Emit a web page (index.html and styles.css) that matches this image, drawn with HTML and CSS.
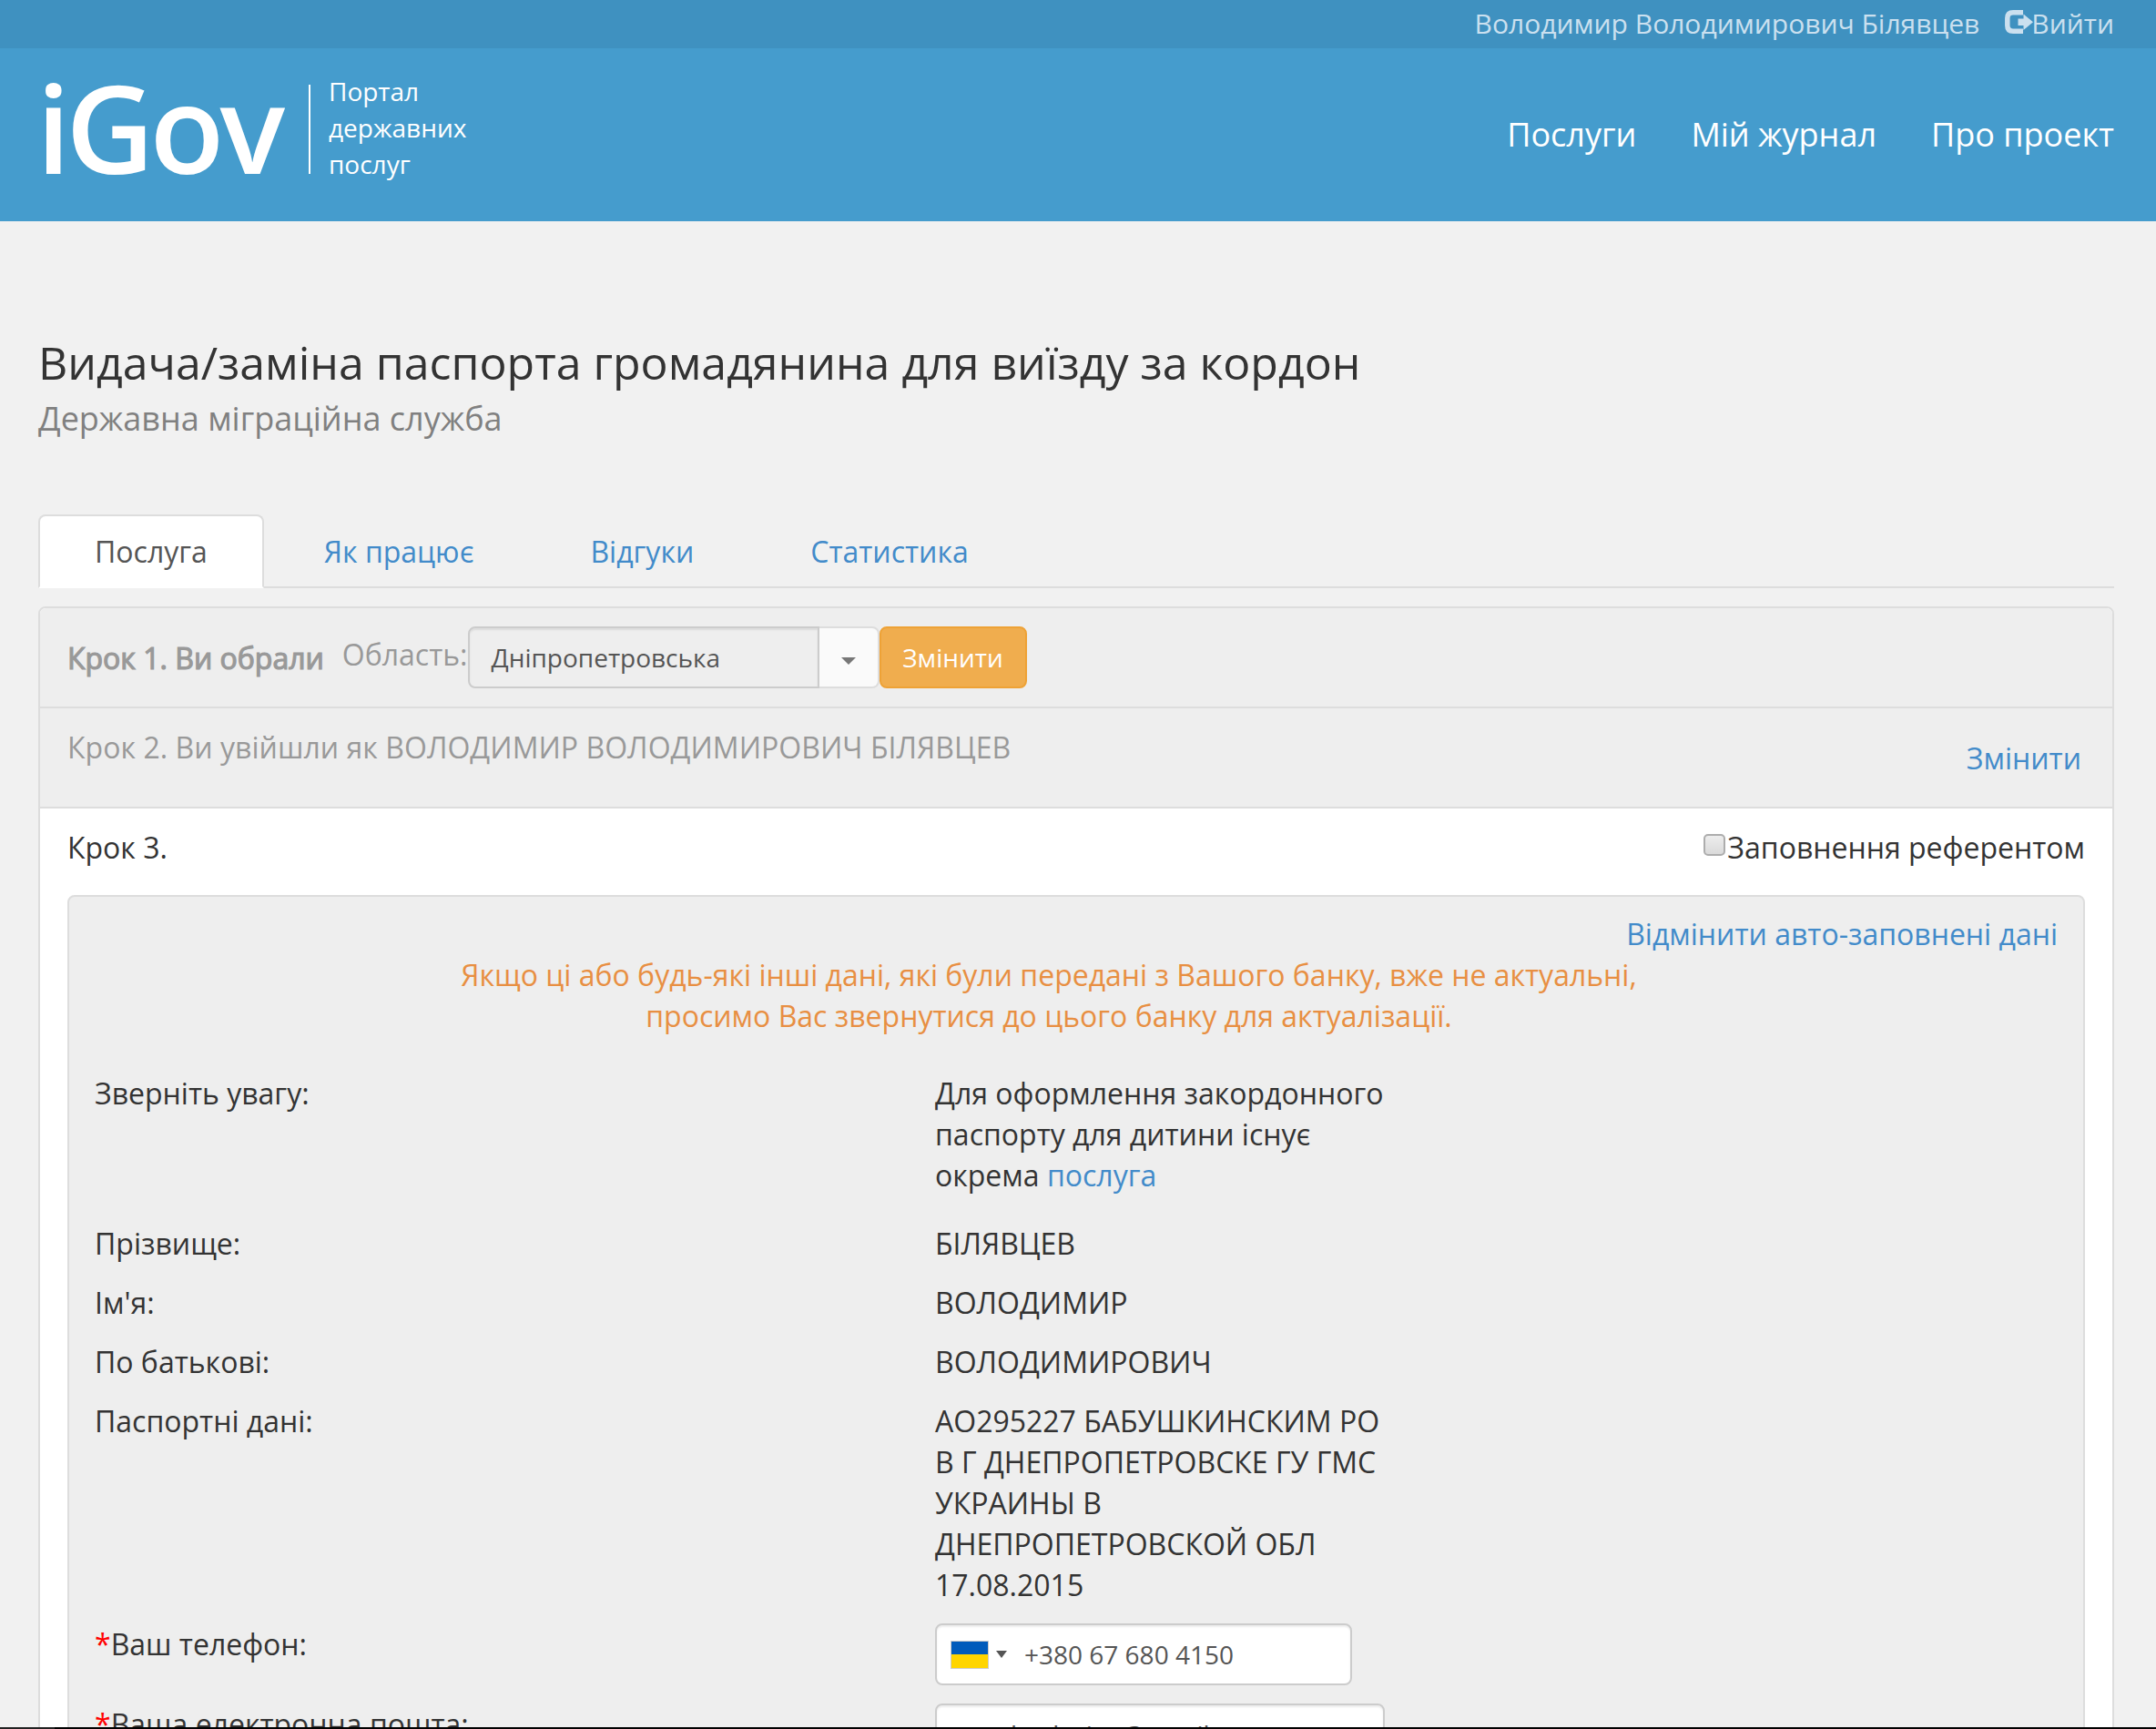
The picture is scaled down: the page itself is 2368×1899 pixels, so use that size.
FILE: index.html
```html
<!DOCTYPE html>
<html lang="uk">
<head>
<meta charset="utf-8">
<title>iGov – Портал державних послуг</title>
<link rel="stylesheet" href="styles.css">
</head>
<body>
<div class="topbar">
  <span class="user">Володимир Володимирович Білявцев</span>
  <a class="logout"><svg class="logout-icon" viewBox="0 0 31 28"><path d="M20 2.800H9Q2.800 2.800 2.800 9v8q0 6.200 6.200 6.200h11" fill="none" stroke="currentColor" stroke-width="5.500"/><path d="M14.500 9.500h6V4.500L31 13.300 20.500 22v-5h-6z" fill="currentColor"/></svg><span>Вийти</span></a>
</div>
<header class="header">
  <div class="brand">
    <span class="logo">iGov</span>
    <span class="tagline"><span>Портал<br>державних<br>послуг</span></span>
  </div>
  <nav class="nav"><a>Послуги</a><a>Мій журнал</a><a>Про проект</a></nav>
</header>
<main class="main">
  <h1 class="title">Видача/заміна паспорта громадянина для виїзду за кордон</h1>
  <p class="subtitle">Державна міграційна служба</p>
  <nav class="tabs"><a class="tab active">Послуга</a><a class="tab">Як працює</a><a class="tab">Відгуки</a><a class="tab">Статистика</a></nav>
  <section class="steps">
    <div class="step step1">
      <span class="step-name">Крок 1. Ви обрали</span>
      <span class="region-label">Область:</span>
      <div class="select"><span class="select-value">Дніпропетровська</span><span class="select-toggle"><i class="caret"></i></span></div>
      <button class="btn">Змінити</button>
    </div>
    <div class="step step2"><span class="who">Крок 2. Ви увійшли як ВОЛОДИМИР ВОЛОДИМИРОВИЧ БІЛЯВЦЕВ</span><a class="link change">Змінити</a></div>
    <div class="step3">
      <div class="step3-head"><span>Крок 3.</span><label class="check"><i class="box"></i>Заповнення референтом</label></div>
      <div class="form">
        <a class="link cancel">Відмінити авто-заповнені дані</a>
        <p class="warning">Якщо ці або будь-які інші дані, які були передані з Вашого банку, вже не актуальні,<br>просимо Вас звернутися до цього банку для актуалізації.</p>
        <div class="row note"><span>Зверніть увагу:</span><span>Для оформлення закордонного<br>паспорту для дитини існує<br>окрема <a class="link">послуга</a></span></div>
        <div class="row"><span>Прізвище:</span><span>БІЛЯВЦЕВ</span></div>
        <div class="row"><span>Ім'я:</span><span>ВОЛОДИМИР</span></div>
        <div class="row"><span>По батькові:</span><span>ВОЛОДИМИРОВИЧ</span></div>
        <div class="row"><span>Паспортні дані:</span><span>АО295227 БАБУШКИНСКИМ РО<br>В Г ДНЕПРОПЕТРОВСКЕ ГУ ГМС<br>УКРАИНЫ В<br>ДНЕПРОПЕТРОВСКОЙ ОБЛ<br>17.08.2015</span></div>
        <div class="row"><span><b class="req">*</b>Ваш телефон:</span><div class="input phone"><i class="flag"></i><i class="caret small"></i><span>+380 67 680 4150</span></div></div>
        <div class="row"><span><b class="req">*</b>Ваша електронна пошта:</span><div class="input email"><span>vyacheslavian@gmail.com</span></div></div>
      </div>
    </div>
  </section>
</main>
<div class="edge"></div>
</body>
</html>
```
FILE: styles.css
```css
* { box-sizing: border-box; }
body {
  margin: 0;
  height: 1899px;
  overflow: hidden;
  background: #f1f1f1;
  color: #333;
  font: 32px/45px "Open Sans", sans-serif;
  display: flex;
  flex-direction: column;
}
.topbar {
  flex: none;
  height: 53px;
  padding-right: 46px;
  background: #3f91c0;
  color: #cbe0ef;
  font-size: 30px;
  line-height: 51px;
  display: flex;
  justify-content: flex-end;
}
.logout { display: flex; margin-left: 28px; }
.logout-icon { width: 31px; height: 28px; margin: 11px -2px 0 0; }
.header {
  flex: none;
  height: 190px;
  padding: 0 46px 0 40px;
  background: #459ccd;
  color: #fff;
  display: flex;
  justify-content: space-between;
}
.brand { display: flex; }
.logo { width: 299px; height: 190px; font-size: 134px; font-weight: 600; line-height: 172px; letter-spacing: -5px; white-space: nowrap; }
.tagline { height: 98px; margin-top: 40px; padding-left: 20px; border-left: 2px solid #fff; font-size: 28px; line-height: 40px; }
.tagline span { display: block; margin-top: -13px; }
.nav { display: flex; gap: 60px; font-size: 36px; line-height: 190px; }
.main { padding: 0 46px 0 42px; flex: none; }
.title { margin: 126px 0 0; font-size: 50px; font-weight: 400; line-height: 59px; white-space: nowrap; }
.subtitle { margin: 7px 0 0; font-size: 36px; line-height: 50px; color: #808080; }
.tabs { display: flex; height: 81px; margin-top: 80px; border-bottom: 2px solid #ddd; }
.tab { height: 81px; padding: 0 60px; border: 2px solid transparent; color: #428bca; line-height: 78px; margin-right: 4px; }
.tab.active { background: #fff; border-color: #ddd; border-bottom-color: #fff; border-radius: 8px 8px 0 0; color: #555; }
.steps { height: 1300px; margin-top: 20px; border: 2px solid #ddd; border-radius: 8px; overflow: hidden; background: #fff; }
.step { height: 110px; padding: 20px 30px; background: #eee; border-bottom: 2px solid #ddd; color: #999; display: flex; }
.step-name { padding-top: 12px; margin-right: 20px; -webkit-text-stroke: 1.2px #999; }
.region-label { padding-top: 8px; }
.select { display: flex; width: 452px; height: 68px; font-size: 28px; line-height: 64px; }
.select-value { width: 386px; padding-left: 24px; border: 2px solid #ccc; border-radius: 8px 0 0 8px; box-shadow: inset 0 2px 2px rgba(0,0,0,.075); color: #555; }
.select-toggle { flex: 1; display: flex; align-items: center; justify-content: center; border: 2px solid #ddd; border-left: 0; border-radius: 0 8px 8px 0; background: #fafafa; }
.caret { border: 8px solid transparent; border-top-color: #777; border-bottom: 0; margin-top: 8px; }
.btn { width: 162px; height: 68px; padding: 0; border: 2px solid #eea236; border-radius: 8px; background: #f0ad4e; color: #fff; font: 28px/64px "Open Sans", sans-serif; }
.step2 { justify-content: space-between; }
.who { letter-spacing: .04px; }
.link { color: #428bca; }
.change { padding: 12px 4px 0 0; }
.step3 { padding: 20px 30px; }
.step3-head { display: flex; justify-content: space-between; height: 75px; }
.check { display: flex; }
.box { width: 24px; height: 24px; margin: 8px 2px 0 0; border: 2px solid #adadad; border-radius: 5px; background: linear-gradient(#ededed, #dadada); }
.form { height: 1300px; padding: 18px 28px; border: 2px solid #ddd; border-radius: 8px; background: #eee; }
.cancel { display: block; text-align: right; }
.warning { width: 2096px; margin: 0 0 40px; color: #e88f42; text-align: center; }
.row { display: grid; grid-template-columns: 923px 494px; margin-bottom: 20px; white-space: nowrap; }
.note { margin-bottom: 30px; }
.req { color: #f00; font-weight: 400; }
.input { height: 68px; border: 2px solid #ccc; border-radius: 8px; background: #fff; box-shadow: inset 0 2px 2px rgba(0,0,0,.075); color: #555; font-size: 28px; line-height: 64px; display: flex; }
.phone { width: 458px; padding-left: 15px; align-items: center; }
.flag { width: 42px; height: 31px; border: 1px solid #ccc; background: linear-gradient(#005bbb 50%, #ffd500 50%); }
.caret.small { border-width: 8px 6px 0; border-top-color: #555; margin: 0 19px 0 8px; }
.email { padding-left: 24px; }
.edge { position: absolute; left: 0; top: 1897px; width: 2368px; height: 2px; background: linear-gradient(90deg, #222 60px, #000 60px); }
```
